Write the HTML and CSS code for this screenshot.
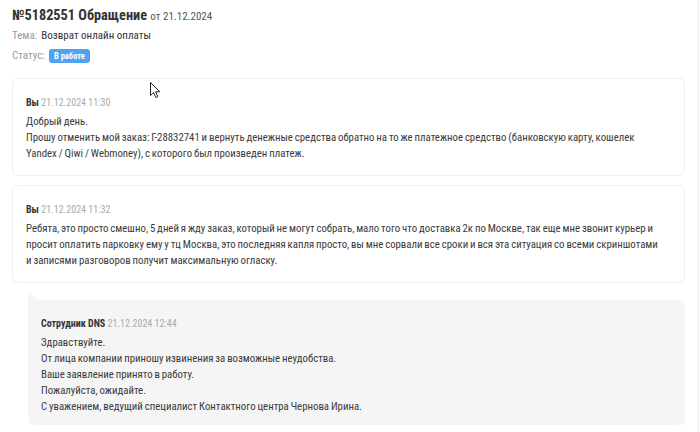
FILE: index.html
```html
<!DOCTYPE html>
<html lang="ru">
<head>
<meta charset="utf-8">
<link rel="stylesheet" href="styles.css">
</head>
<body>
<div class="page">
  <div class="head">
    <h1 class="title">№5182551 Обращение <span class="title-date">от 21.12.2024</span></h1>
    <div class="meta"><span class="meta-label">Тема:</span> <span class="meta-value">Возврат онлайн оплаты</span></div>
    <div class="meta"><span class="meta-label">Статус:</span> <span class="badge">В работе</span></div>
  </div>

  <div class="thread">
    <div class="msg">
      <div class="msg-head"><b class="author">Вы</b> <span class="date">21.12.2024 11:30</span></div>
      <div class="msg-body">Добрый день.<br>Прошу отменить мой заказ: Г-28832741 и вернуть денежные средства обратно на то же платежное средство (банковскую карту, кошелек<br>Yandex / Qiwi / Webmoney), с которого был произведен платеж.</div>
    </div>
    <div class="msg">
      <div class="msg-head"><b class="author">Вы</b> <span class="date">21.12.2024 11:32</span></div>
      <div class="msg-body">Ребята, это просто смешно, 5 дней я жду заказ, который не могут собрать, мало того что доставка 2к по Москве, так еще мне звонит курьер и<br>просит оплатить парковку ему у тц Москва, это последняя капля просто, вы мне сорвали все сроки и вся эта ситуация со всеми скриншотами<br>и записями разговоров получит максимальную огласку.</div>
    </div>
    <div class="msg msg-staff">
      <div class="msg-head"><b class="author">Сотрудник DNS</b> <span class="date">21.12.2024 12:44</span></div>
      <div class="msg-body">Здравствуйте.<br>От лица компании приношу извинения за возможные неудобства.<br>Ваше заявление принято в работу.<br>Пожалуйста, ожидайте.<br>С уважением, ведущий специалист Контактного центра Чернова Ирина.</div>
    </div>
  </div>

  <svg class="cursor" width="12" height="18" viewBox="0 0 12 18" aria-hidden="true">
    <path d="M0.5 0.5 L0.5 13.5 L3.6 10.6 L5.8 15.6 L7.8 14.7 L5.7 9.8 L9.8 9.8 Z" fill="#fff" stroke="#222" stroke-width="1" stroke-linejoin="round"/>
  </svg>
</div>
</body>
</html>
```

FILE: styles.css
```css
html, body {
  margin: 0;
  padding: 0;
  background: #fff;
}

body {
  font-family: "Roboto Condensed", Roboto, "Liberation Sans", sans-serif;
  font-size: 11px;
  color: #333;
}

.page {
  position: relative;
  width: 699px;
  height: 432px;
  border-right: 1px solid #ececec;
  padding: 5px 13px 0 12px;
  box-sizing: border-box;
  overflow: hidden;
}

.title {
  margin: 0;
  font-size: 14.3px;
  line-height: 20px;
  height: 21px;
  font-weight: 700;
  color: #333;
}

.title-date {
  font-size: 11px;
  font-weight: 400;
  color: #555;
}

.meta {
  display: flex;
  align-items: center;
  gap: 4px;
  height: 20px;
  line-height: 16px;
}

.meta-label {
  color: #999;
}

.meta-value {
  color: #333;
}

.badge {
  display: inline-block;
  background: #4fa3f0;
  color: #fff;
  font-size: 8.5px;
  font-weight: 700;
  line-height: 14px;
  padding: 0 5px;
  border-radius: 3px;
}

.thread {
  display: flex;
  flex-direction: column;
  margin-top: 12px;
}

.msg {
  position: relative;
  border: 1px solid #efefef;
  border-radius: 6px;
  padding: 16px 6px 13px 13px;
  margin-bottom: 9px;
}

.msg-head {
  line-height: 16px;
  font-size: 10px;
}

.author {
  font-weight: 700;
  color: #333;
}

.date {
  color: #aaa;
}

.msg-body {
  margin-top: 3px;
  line-height: 16px;
  font-size: 10.8px;
  word-spacing: -0.6px;
  white-space: nowrap;
  color: #3a3a3a;
}

.msg-staff {
  margin: 8px 0 0 16px;
  border: 0;
  border-radius: 0 6px 6px 6px;
  background: #f5f5f5;
  padding: 16px 14px 10px 13px;
}

.msg-staff .msg-body {
  margin-top: 3px;
}

.msg-staff::before {
  content: "";
  position: absolute;
  left: 0;
  top: -8px;
  border-left: 10px solid #f5f5f5;
  border-top: 8px solid transparent;
}

.cursor {
  position: absolute;
  left: 150px;
  top: 82px;
}
```
